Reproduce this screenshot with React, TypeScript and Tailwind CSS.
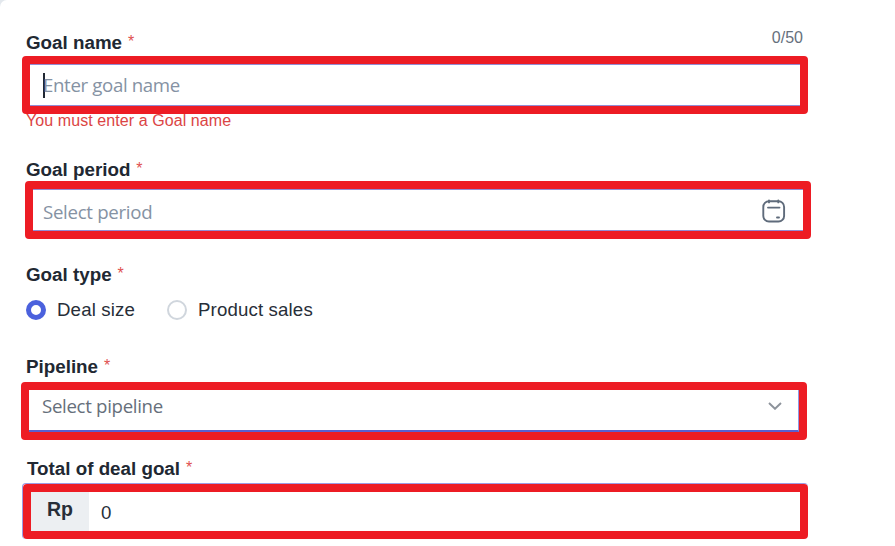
import React, { useState } from 'react';

type GoalType = 'deal' | 'product';

const FieldLabel: React.FC<{ text: string; className?: string }> = ({ text, className = '' }) => (
  <div className={`flex h-[28px] items-center whitespace-pre pt-px text-[18.8px] font-bold leading-[28px] text-[#212832] ${className}`}>
    {text}
    <span className="pb-px pl-[6px] text-[16px] font-normal text-[#e0504f]">*</span>
  </div>
);

const CalendarIcon: React.FC = () => (
  <svg width="24" height="24" viewBox="0 0 24 24" fill="none" stroke="#5f6b7b" strokeWidth="1.9" strokeLinecap="round">
    <rect x="1.3" y="2.3" width="20.8" height="20.2" rx="5.6" />
    <path d="M7 1.4v2M16.3 1.4v2M6 8.6h11.5M15 18.5h2" />
  </svg>
);

const Radio: React.FC<{ label: string; checked: boolean; onSelect: () => void }> = ({ label, checked, onSelect }) => (
  <button type="button" onClick={onSelect} className="flex items-center gap-[11px] text-[18.67px] tracking-[0.14px] text-[#272e38]">
    <span
      className={`h-5 w-5 shrink-0 rounded-full bg-white ${
        checked ? 'border-[5px] border-[#4b61dd]' : 'border-2 border-[#d0d6dd]'
      }`}
    />
    {label}
  </button>
);

const App: React.FC = () => {
  const [goalType, setGoalType] = useState<GoalType>('deal');

  return (
    <div className="h-[546px] w-full overflow-hidden bg-[#e3e8ed] font-['Liberation_Sans',Arial,sans-serif]">
      <div className="h-full rounded-tl-[7px] bg-white pl-[26px] pt-[28px]">
        <div className="flex w-[777px] justify-between">
          <FieldLabel text="Goal name" />
          <span className="h-[28px] text-[16px] leading-[19px] text-[#66707c]">0/50</span>
        </div>
        <div className="-ml-[4px] h-[58px] w-[786px] rounded-[4px] border-8 border-[#ed1c24] bg-white">
          <div className="flex h-full items-center border-y border-[#928bd3] pl-[13px]">
            <span className="h-[25px] w-[2px] shrink-0 bg-[#212832]" />
            <span className="-ml-[2px] font-['Open_Sans','Noto_Sans',sans-serif] text-[18.67px] tracking-[-0.36px] text-[#8592a3]">
              Enter goal name
            </span>
          </div>
        </div>
        <div className="h-[12px] pt-px text-[16px] leading-[12px] tracking-[0.08px] text-[#db4545]">You must enter a Goal name</div>

        <FieldLabel text="Goal period" className="mt-[29px] -mb-[2px]" />
        <div className="-ml-[1px] h-[58px] w-[786px] rounded-[4px] border-8 border-[#ed1c24] bg-white">
          <div className="flex h-full items-center justify-between border-y border-[#928bd3] pl-[10px] pr-[17px] pt-[2px]">
            <span className="pt-px font-['Open_Sans','Noto_Sans',sans-serif] text-[18.67px] tracking-[-0.3px] text-[#8592a3]">
              Select period
            </span>
            <CalendarIcon />
          </div>
        </div>

        <FieldLabel text="Goal type" className="mt-[21px]" />
        <div className="mt-[8px] flex h-[28px] items-center gap-8">
          <Radio label="Deal size" checked={goalType === 'deal'} onSelect={() => setGoalType('deal')} />
          <Radio label="Product sales" checked={goalType === 'product'} onSelect={() => setGoalType('product')} />
        </div>

        <FieldLabel text="Pipeline" className="mt-[28px]" />
        <div className="-ml-[5px] mt-[2px] h-[58px] w-[786px] rounded-[4px] border-8 border-[#ed1c24] bg-white">
          <div className="flex h-full items-center justify-between border-b-2 border-r border-b-[#5a5fd0] border-r-[#8f9be6] pb-[8px] pl-[13px] pr-[16px]">
            <span className="font-['Open_Sans','Noto_Sans',sans-serif] text-[18.67px] tracking-[-0.32px] text-[#666f7b]">
              Select pipeline
            </span>
            <svg width="14" height="8" viewBox="0 0 14 8" fill="none" stroke="#8d939b" strokeWidth="1.9">
              <path d="M1 1l6 5.8L13 1" />
            </svg>
          </div>
        </div>

        <FieldLabel text="Total of deal goal" className="mt-[14px] pl-[1px]" />
        <div className="-ml-[4px] mt-[1px] h-[56px] w-[786px] rounded-[4px] border-l border-t border-[#9d9be4]">
          <div className="flex h-[55px] rounded-[4px] border-8 border-[#ed1c24] bg-white text-[18.67px] text-[#272e38]">
            <span className="flex w-[58px] items-center justify-center bg-[#eceff2] pb-[3px] text-[19.5px] font-bold">Rp</span>
            <span className="flex items-center pl-[12px] pt-[2px]">0</span>
          </div>
        </div>
      </div>
    </div>
  );
};

export default App;
